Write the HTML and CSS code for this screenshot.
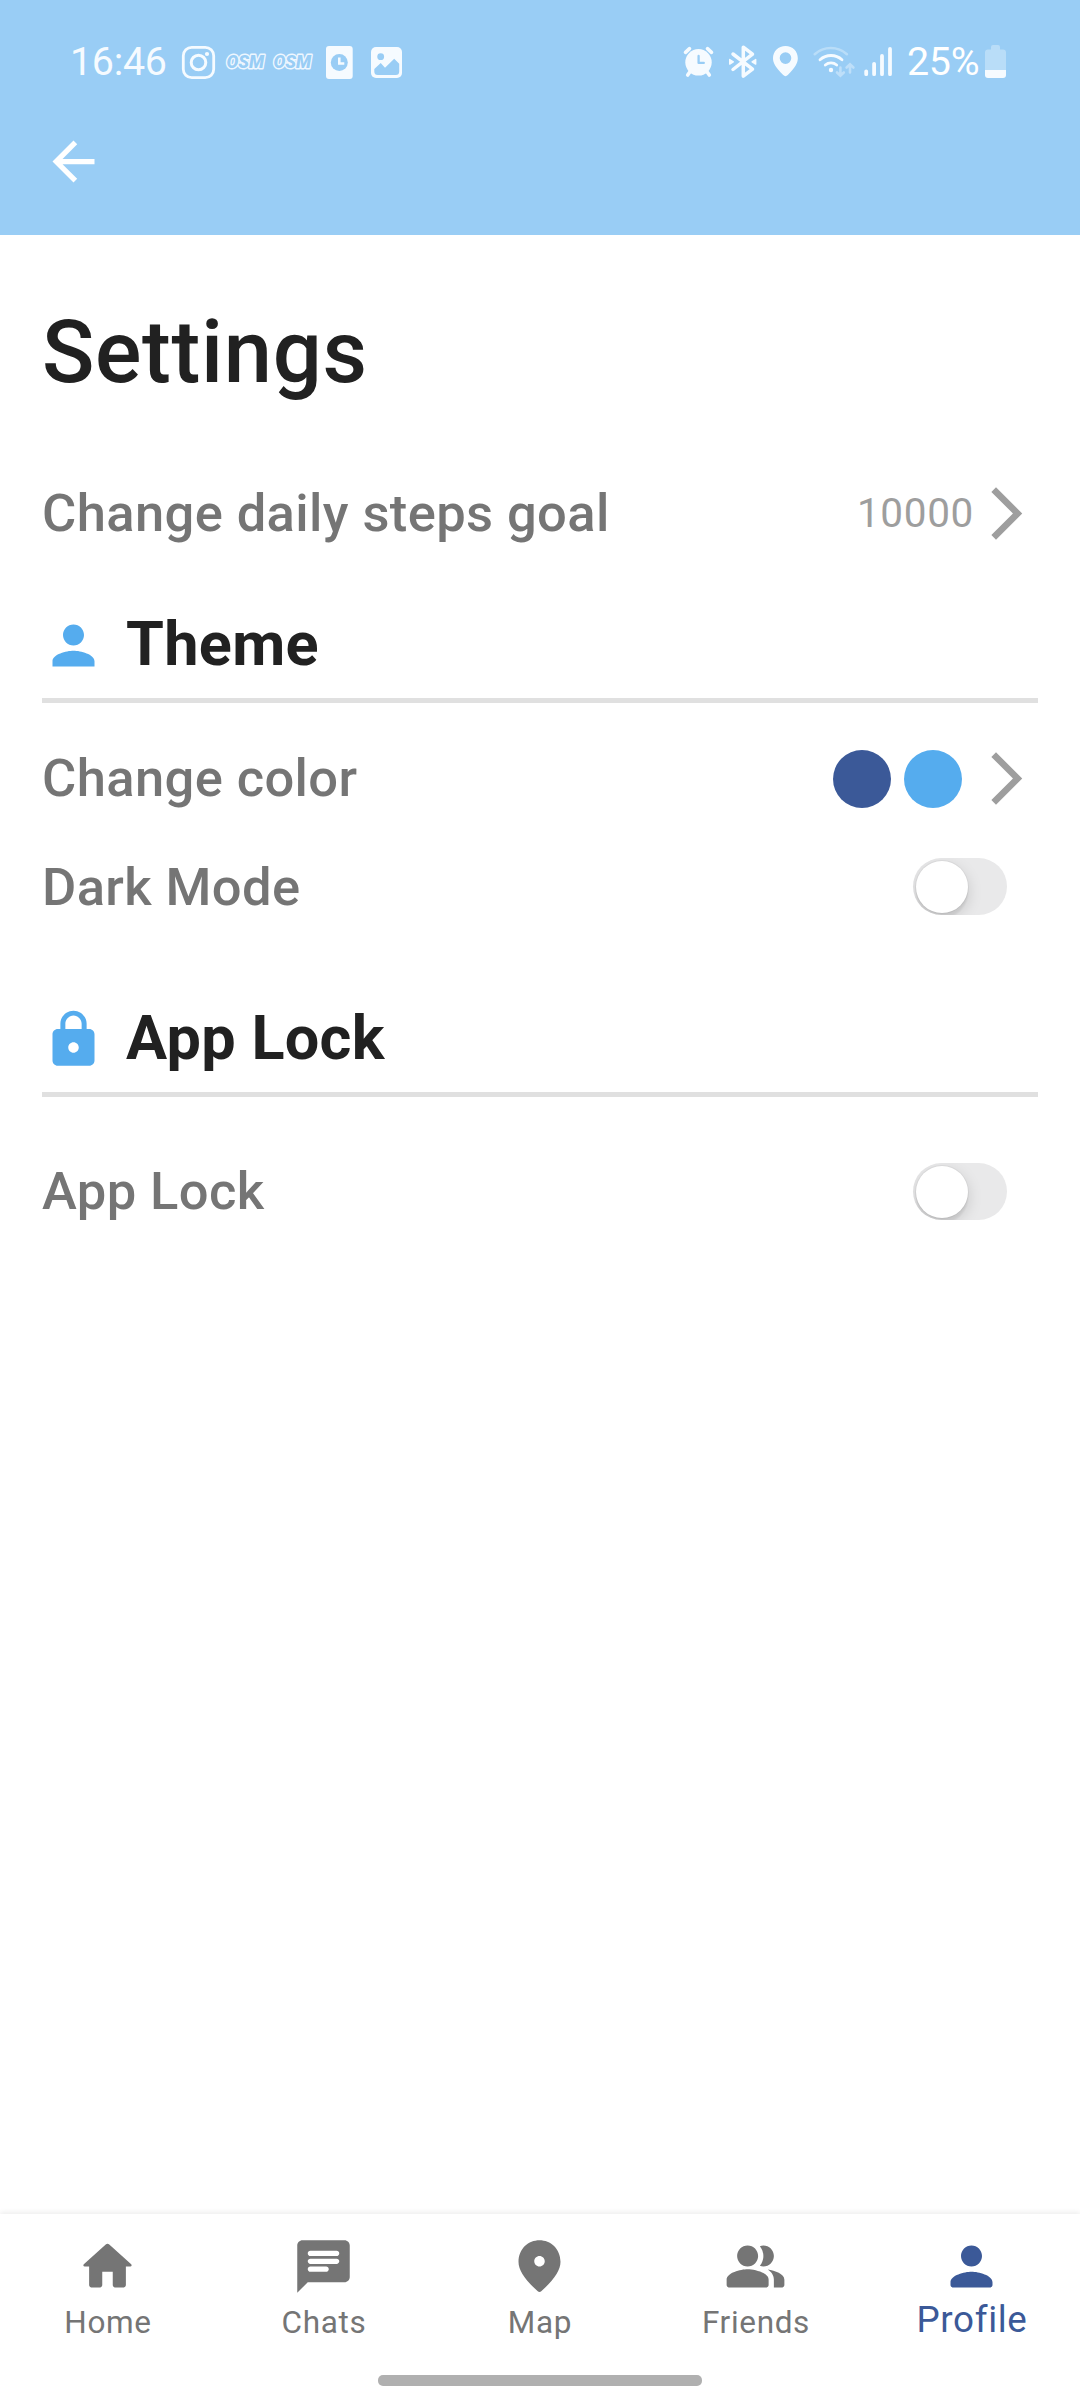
FILE: index.html
```html
<!DOCTYPE html>
<html lang="en">
<head>
<meta charset="utf-8">
<title>Settings</title>
<link rel="stylesheet" href="styles.css">
</head>
<body>
<div class="screen">
  <header class="app-header">
    <div class="status-bar">
      <div class="status-left">
        <span class="status-text">16:46</span>
        <svg width="37" height="40" viewBox="180 42 37 40">
          <rect x="183.3" y="47.3" width="30.4" height="30.4" rx="8.5" fill="none" stroke="currentColor" stroke-width="2.8"/>
          <circle cx="198.5" cy="62.5" r="7.3" fill="none" stroke="currentColor" stroke-width="3"/>
          <circle cx="207" cy="54" r="2.1" fill="currentColor"/>
        </svg>
        <svg class="osm" width="47" height="40" viewBox="222 42 47 40">
          <text x="226.5" y="68.4" textLength="37.5" lengthAdjust="spacingAndGlyphs">OSM</text>
        </svg>
        <svg class="osm" width="47" height="40" viewBox="222 42 47 40">
          <text x="226.5" y="68.4" textLength="37.5" lengthAdjust="spacingAndGlyphs">OSM</text>
        </svg>
        <svg class="icon-event" width="33" height="40" viewBox="323 42 33 40">
          <rect x="326" y="46" width="26.7" height="33" rx="3" fill="currentColor"/>
          <circle cx="339.3" cy="62.5" r="8.5" fill="#99cdf5"/>
          <path d="M339.3 57.5v6h5" fill="none" stroke="currentColor" stroke-width="2.6"/>
        </svg>
        <svg class="icon-image" width="37" height="40" viewBox="368 42 37 40">
          <rect x="371" y="47" width="31" height="31" rx="5" fill="currentColor"/>
          <circle cx="380.7" cy="56.7" r="3.4" fill="#99cdf5"/>
          <path d="M374.3 69l6.4-6 4.3 4.8 9.2-9 5 5V71.500a3.500 3.500 0 0 1-3.500 3.500H377.800a3.500 3.500 0 0 1-3.500-3.500z" fill="#99cdf5"/>
        </svg>
      </div>
      <div class="status-right">
        <svg width="35" height="40" viewBox="682 42 35 40">
          <circle cx="698.5" cy="62.300" r="13.200" fill="currentColor"/>
          <path d="M685.500 52.300l4-3.600M711.500 52.300l-4-3.600M690.500 71l-2.800 4M706.500 71l2.800 4" fill="none" stroke="currentColor" stroke-width="3.600" stroke-linecap="round"/>
          <path d="M698.600 56v6.900h5.200" fill="none" stroke="#99cdf5" stroke-width="2.300" stroke-linecap="round" stroke-linejoin="round"/>
        </svg>
        <svg class="icon-bt" width="35" height="40" viewBox="726 42 35 40">
          <path d="M733 54l19.500 15.200-9.200 6.900V47.200l9.200 6.900L733 69.500" fill="none" stroke="currentColor" stroke-width="3.500" stroke-linecap="round" stroke-linejoin="round"/>
          <path d="M729.700 59.500l3.600 2.300-3.600 2.300zM755.700 59.500l-3.600 2.300 3.600 2.300z" fill="currentColor" stroke="currentColor" stroke-width="1.400" stroke-linejoin="round"/>
        </svg>
        <svg class="icon-pin" width="30" height="40" viewBox="771 42 30 40">
          <path fill-rule="evenodd" d="M785.500 46c-7.200 0-12.500 5.400-12.500 12.200 0 5 2.500 8.500 10.200 16.900 1.400 1.500 3.200 1.500 4.600 0 7.700-8.400 10-11.900 10-16.900C797.800 51.400 792.700 46 785.500 46zm0 6.300a5.800 5.800 0 1 1 0 11.600 5.800 5.800 0 0 1 0-11.600z" fill="currentColor"/>
        </svg>
        <svg class="icon-wifi" width="46" height="40" viewBox="811 42 46 40">
          <g fill="none" stroke="currentColor" stroke-linecap="round">
            <path d="M814.700 54.200a23.800 23.800 0 0 1 32.200 0" stroke-width="2.600" opacity=".35"/>
            <path d="M820 59.700a16.500 16.500 0 0 1 22 0" stroke-width="2.800"/>
            <path d="M825.300 65a8.800 8.800 0 0 1 11.400 0" stroke-width="2.800"/>
            <path d="M840.400 67.500v8m-3.400-3l3.400 3.200 3.400-3.200M850 72.500v-8m-3.400 3l3.400-3.200 3.400 3.200" stroke-width="2.600" opacity=".4"/>
          </g>
          <circle cx="831" cy="70" r="2.200" fill="currentColor"/>
        </svg>
        <svg class="icon-signal" width="32" height="40" viewBox="862 42 32 40">
          <path d="M866.200 71.300v2.900M874.100 63.800v10.400M882 56v18.200M890 49v25.200" fill="none" stroke="currentColor" stroke-width="3.800" stroke-linecap="round"/>
        </svg>
        <span class="status-text battery-text">25%</span>
        <svg class="icon-battery" width="25" height="40" viewBox="983 42 25 40">
          <path d="M985 70V52.500a3 3 0 0 1 3-3h3V47a2 2 0 0 1 2-2h5a2 2 0 0 1 2 2v2.500h3a3 3 0 0 1 3 3V70z" fill="currentColor" opacity=".35"/>
          <path d="M985 70h21v5a3 3 0 0 1-3 3h-15a3 3 0 0 1-3-3z" fill="currentColor"/>
        </svg>
      </div>
    </div>
    <svg class="back" width="63" height="63" viewBox="0 0 24 24"><path fill="currentColor" d="M20 11H7.830l5.590-5.590L12 4l-8 8 8 8 1.410-1.410L7.830 13H20v-2z"/></svg>
  </header>

  <main class="content">
    <h1 class="title">Settings</h1>
    <div class="row row-goal">
      <span class="label">Change daily steps goal</span>
      <span class="value">10000</span>
      <svg class="chevron" width="63" height="63" viewBox="0 0 24 24"><path fill="currentColor" d="M6.230 20.230L8 22l10-10L8 2 6.230 3.770 14.460 12z"/></svg>
    </div>

    <section class="section section-theme">
      <h2 class="section-head">
        <svg width="63" height="63" viewBox="0 0 24 24"><path fill="currentColor" d="M12 12c2.210 0 4-1.790 4-4s-1.790-4-4-4-4 1.790-4 4 1.790 4 4 4zm0 2c-2.670 0-8 1.340-8 4v2h16v-2c0-2.660-5.330-4-8-4z"/></svg>
        <span>Theme</span>
      </h2>
      <div class="row row-color">
        <span class="label">Change color</span>
        <span class="swatches"><i class="swatch swatch-primary"></i><i class="swatch swatch-accent"></i></span>
        <svg class="chevron" width="63" height="63" viewBox="0 0 24 24"><path fill="currentColor" d="M6.230 20.230L8 22l10-10L8 2 6.230 3.770 14.460 12z"/></svg>
      </div>
      <div class="row row-dark">
        <span class="label">Dark Mode</span>
        <span class="toggle"><i class="knob"></i></span>
      </div>
    </section>

    <section class="section section-lock">
      <h2 class="section-head">
        <svg width="63" height="63" viewBox="0 0 24 24"><path fill="currentColor" d="M18 8h-1V6c0-2.760-2.240-5-5-5S7 3.240 7 6v2H6c-1.100 0-2 .9-2 2v10c0 1.100.9 2 2 2h12c1.100 0 2-.9 2-2V10c0-1.100-.9-2-2-2zm-6 9c-1.100 0-2-.9-2-2s.9-2 2-2 2 .9 2 2-.9 2-2 2zm3.100-9H8.900V6c0-1.710 1.390-3.100 3.100-3.100 1.710 0 3.100 1.390 3.100 3.100v2z"/></svg>
        <span>App Lock</span>
      </h2>
      <div class="row row-lock">
        <span class="label">App Lock</span>
        <span class="toggle"><i class="knob"></i></span>
      </div>
    </section>
  </main>

  <footer class="bottom">
    <nav class="tabs">
      <a class="tab">
        <svg width="63" height="63" viewBox="0 0 24 24"><path fill="currentColor" d="M10 19v-5h4v5c0 .55.45 1 1 1h3c.55 0 1-.45 1-1v-7h1.700c.46 0 .68-.57.33-.87L12.670 3.600c-.38-.34-.96-.34-1.340 0l-8.360 7.530c-.34.3-.13.87.33.87H5v7c0 .55.45 1 1 1h3c.55 0 1-.45 1-1z"/></svg>
        <span>Home</span>
      </a>
      <a class="tab">
        <svg width="63" height="63" viewBox="0 0 24 24"><path fill="currentColor" d="M20 2H4c-1.100 0-2 .9-2 2v18l4-4h14c1.100 0 2-.9 2-2V4c0-1.100-.9-2-2-2zM7 9h10c.55 0 1 .45 1 1s-.45 1-1 1H7c-.55 0-1-.45-1-1s.45-1 1-1zm6 5H7c-.55 0-1-.45-1-1s.45-1 1-1h6c.55 0 1 .45 1 1s-.45 1-1 1zm4-6H7c-.55 0-1-.45-1-1s.45-1 1-1h10c.55 0 1 .45 1 1s-.45 1-1 1z"/></svg>
        <span>Chats</span>
      </a>
      <a class="tab">
        <svg width="63" height="63" viewBox="0 0 24 24"><path fill="currentColor" d="M12 2C7.800 2 4 5.220 4 10.200c0 3.180 2.450 6.920 7.340 11.230.38.33.95.33 1.330 0C17.550 17.120 20 13.380 20 10.200 20 5.220 16.200 2 12 2zm0 10c-1.100 0-2-.9-2-2s.9-2 2-2 2 .9 2 2-.9 2-2 2z"/></svg>
        <span>Map</span>
      </a>
      <a class="tab">
        <svg width="63" height="63" viewBox="0 0 24 24"><path fill="currentColor" d="M16.670 13.130C18.040 14.060 19 15.320 19 17v3h3c.55 0 1-.45 1-1v-2c0-2.180-3.570-3.470-6.330-3.870zM15 12c2.210 0 4-1.790 4-4s-1.790-4-4-4c-.47 0-.91.1-1.330.24C14.500 5.270 15 6.580 15 8s-.5 2.730-1.330 3.760c.42.14.86.24 1.330.24zM9 12c2.210 0 4-1.790 4-4s-1.790-4-4-4-4 1.790-4 4 1.790 4 4 4zm0 1c-2.670 0-8 1.340-8 4v2c0 .55.45 1 1 1h14c.55 0 1-.45 1-1v-2c0-2.660-5.330-4-8-4z"/></svg>
        <span>Friends</span>
      </a>
      <a class="tab tab-active">
        <svg width="63" height="63" viewBox="0 0 24 24"><path fill="currentColor" d="M12 12c2.210 0 4-1.790 4-4s-1.790-4-4-4-4 1.790-4 4 1.790 4 4 4zm0 2c-2.670 0-8 1.340-8 4v1c0 .55.45 1 1 1h14c.55 0 1-.45 1-1v-1c0-2.660-5.330-4-8-4z"/></svg>
        <span>Profile</span>
      </a>
    </nav>
    <div class="gesture-bar"></div>
  </footer>
</div>
</body>
</html>
```
FILE: styles.css
```css
* { box-sizing: border-box; }
body { margin: 0; font-family: Roboto, "Liberation Sans", sans-serif; background: #fff; }
h1, h2 { margin: 0; }
svg { display: block; flex: none; }

.screen { width: 1080px; height: 2400px; display: flex; flex-direction: column; }

/* Header */
.app-header { height: 235px; background: #99cdf5; color: #fff; }
.status-bar { height: 130px; padding: 42px 72px 0 70px; display: flex; justify-content: space-between; color: #f6fbff; }
.status-left, .status-right { display: flex; height: 40px; }
.status-text { width: 110px; font-size: 39.4px; line-height: 40px; letter-spacing: -.3px; white-space: nowrap; }
.osm { margin-left: 5px; }
.osm + .osm { margin-left: 0; }
.osm text { font: italic 900 17.6px Roboto, sans-serif; fill: #99cdf5; stroke: #eef7ff; stroke-width: 2.8px; paint-order: stroke; stroke-linejoin: round; }
.icon-event { margin-left: 7px; }
.icon-image { margin-left: 12px; }
.icon-bt { margin-left: 9px; }
.icon-pin { margin-left: 10px; }
.icon-wifi { margin-left: 10px; }
.icon-signal { margin-left: 5px; }
.battery-text { width: 76px; margin-left: 13px; color: #fff; }
.back { margin-left: 42px; }

/* Settings */
.content { flex: 1; padding: 58px 42px 0; }
.title { height: 120px; font-size: 86.6px; line-height: 120px; font-weight: 500; letter-spacing: .65px; color: #212121; }
.row { height: 64px; display: flex; align-items: center; }
.label { flex: 1; font-size: 52.5px; line-height: 64px; font-weight: 500; letter-spacing: .39px; color: #757575; }
.row-goal { margin-top: 68px; }
.value { font-size: 40.5px; letter-spacing: .66px; margin-right: 1px; color: #9e9e9e; }
.chevron { color: #9e9e9e; }
.section-head { height: 92px; border-bottom: 5px solid #e0e0e0; display: flex; gap: 21px; color: #55acee; }
.section-head span { margin-top: 2px; font-size: 61.2px; line-height: 63px; font-weight: 700; letter-spacing: .3px; color: #212121; }
.section-head svg { margin-top: 3px; }
.section-theme { margin-top: 66px; }
.row-color { margin-top: 43px; }
.row-dark { margin-top: 45px; }
.swatches { display: flex; gap: 13px; margin: 2px 13px 0 0; }
.swatch { width: 58px; height: 58px; border-radius: 50%; }
.swatch-primary { background: #3b5998; }
.swatch-accent { background: #55acee; }
.toggle { width: 94px; height: 57px; margin: 0 31px 1px 0; padding: 2.5px; border-radius: 29px; background: #e9e9ea; overflow: hidden; }
.knob { display: block; width: 52px; height: 52px; border-radius: 50%; background: #fff; box-shadow: 0 5px 15px rgba(0,0,0,.15), 0 5px 2px rgba(0,0,0,.06), 0 0 0 1px rgba(0,0,0,.04); }
.section-lock { margin-top: 86px; }
.row-lock { margin-top: 62px; }
.row-lock .toggle { margin: 1px 31px 0 0; }

/* Bottom navigation */
.bottom { height: 186px; box-shadow: 0 -2px 5px rgba(0,0,0,.07); }
.tabs { height: 161px; padding-top: 21px; display: grid; grid-template-columns: repeat(5, 1fr); }
.tab { display: flex; flex-direction: column; align-items: center; color: #757575; font-size: 31.5px; line-height: 40px; letter-spacing: .66px; }
.tab svg { margin-right: 1px; }
.tab span { margin-top: 5px; }
.tab-active { color: #3b5998; font-size: 36.75px; }
.tab-active span { margin-top: 2px; }
.gesture-bar { width: 324px; height: 11px; margin: 0 auto; border-radius: 5px; background: #b0b0b0; }
```
